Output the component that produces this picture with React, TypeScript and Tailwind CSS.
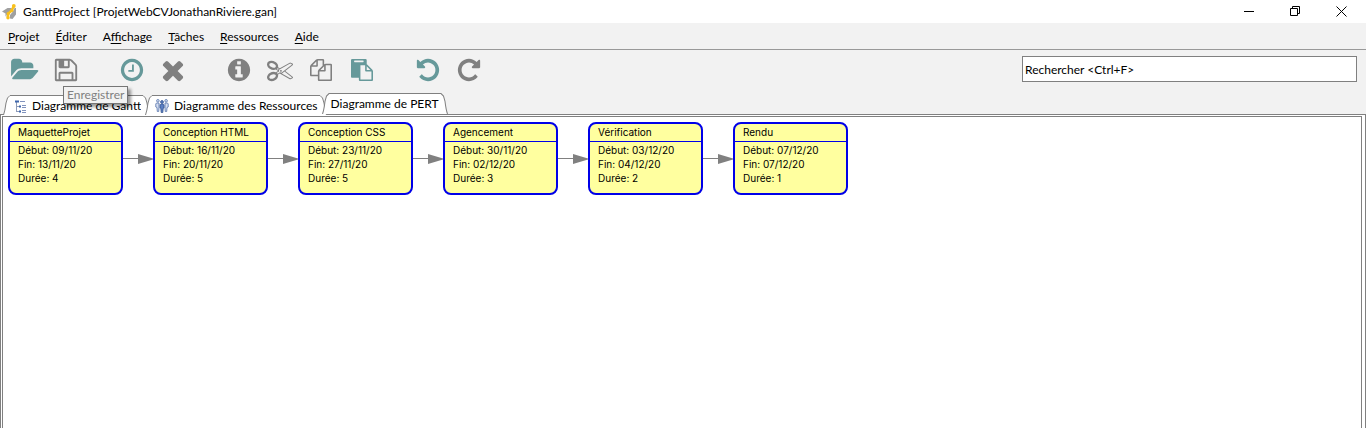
import React from "react";

const FONT = "font-['Lato','Open_Sans',sans-serif]";

const paths = {
  open: "M1879 952q0 31-31 66l-336 396q-43 51-120.500 86.500t-143.500 35.500h-1088q-34 0-60.500-13t-26.500-43q0-31 31-66l336-396q43-51 120.500-86.500t143.500-35.500h1088q34 0 60.500 13t26.500 43zm-343-344v160h-832q-94 0-197 47.500t-164 119.500l-337 396-5 6q0-4-.5-12.500t-.5-12.500v-960q0-92 66-158t158-66h320q92 0 158 66t66 158v32h544q92 0 158 66t66 158z",
  save: "M512 1536h768v-384h-768v384zm896 0h128v-896q0-14-10-38.500t-20-34.500l-281-281q-10-10-34-20t-39-10v416q0 40-28 68t-68 28h-576q-40 0-68-28t-28-68v-416h-128v1280h128v-416q0-40 28-68t68-28h832q40 0 68 28t28 68v416zm-384-928v-320q0-13-9.500-22.500t-22.500-9.500h-192q-13 0-22.500 9.500t-9.500 22.500v320q0 13 9.500 22.500t22.500 9.500h192q13 0 22.500-9.500t9.500-22.500zm640 32v928q0 40-28 68t-68 28h-1344q-40 0-68-28t-28-68v-1344q0-40 28-68t68-28h928q40 0 88 20t76 48l280 280q28 28 48 76t20 88z",
  clock: "M1024 544v448q0 14-9 23t-23 9h-320q-14 0-23-9t-9-23v-64q0-14 9-23t23-9h224v-352q0-14 9-23t23-9h64q14 0 23 9t9 23zm416 352q0-148-73-273t-198-198-273-73-273 73-198 198-73 273 73 273 198 198 273 73 273-73 198-198 73-273zm224 0q0 209-103 385.500t-279.500 279.500-385.500 103-385.500-103-279.500-279.500-103-385.500 103-385.500 279.500-279.500 385.500-103 385.500 103 279.500 279.500 103 385.500z",
  remove: "M1490 1322q0 40-28 68l-136 136q-28 28-68 28t-68-28l-294-294-294 294q-28 28-68 28t-68-28l-136-136q-28-28-28-68t28-68l294-294-294-294q-28-28-28-68t28-68l136-136q28-28 68-28t68 28l294 294 294-294q28-28 68-28t68 28l136 136q28 28 28 68t-28 68l-294 294 294 294q28 28 28 68z",
  info: "M1152 1376v-160q0-14-9-23t-23-9h-96v-512q0-14-9-23t-23-9h-320q-14 0-23 9t-9 23v160q0 14 9 23t23 9h96v320h-96q-14 0-23 9t-9 23v160q0 14 9 23t23 9h448q14 0 23-9t9-23zm-128-896v-160q0-14-9-23t-23-9h-192q-14 0-23 9t-9 23v160q0 14 9 23t23 9h192q14 0 23-9t9-23zm640 416q0 209-103 385.500t-279.500 279.500-385.500 103-385.500-103-279.500-279.500-103-385.500 103-385.500 279.500-279.500 385.500-103 385.500 103 279.500 279.500 103 385.500z",
  cut: "M960 896q26 0 45 19t19 45-19 45-45 19-45-19-19-45 19-45 45-19zm300 64l507 398q28 20 25 56-5 35-35 51l-128 64q-13 7-29 7-17 0-31-8l-690-387-110 66q-8 4-12 5 14 49 10 97-7 77-56 147.500t-132 123.500q-132 84-277 84-136 0-222-78-90-84-79-207 7-76 56-147t131-124q132-84 278-84 83 0 151 31 9-13 22-22l122-73-122-73q-13-9-22-22-68 31-151 31-146 0-278-84-82-53-131-124t-56-147q-5-59 15.500-113t63.500-93q85-79 222-79 145 0 277 84 83 52 132 123t56 148q4 48-10 97 4 1 12 5l110 66 690-387q14-8 31-8 16 0 29 7l128 64q30 16 35 51 3 36-25 56zm-681-260q46-42 21-108t-106-117q-92-59-192-59-74 0-113 36-46 42-21 108t106 117q92 59 192 59 74 0 113-36zm-85 745q81-51 106-117t-21-108q-39-36-113-36-100 0-192 59-81 51-106 117t21 108q39 36 113 36 100 0 192-59zm178-613l96 58v-11q0-36 33-56l14-8-79-44-26 26q-3 3-10 11t-12 12q-2 2-4 3.500t-3 2.500zm224 224l96 32 736-576-128-64-768 431v113l-160 96 9 8q2 2 7 6 4 4 11 12t11 12l26 26zm704 416l128-64-520-408-177 138q-2 3-13 7z",
  copy: "M1696 384q40 0 68 28t28 68v1216q0 40-28 68t-68 28h-960q-40 0-68-28t-28-68v-288h-544q-40 0-68-28t-28-68v-672q0-40 20-88t48-76l408-408q28-28 76-48t88-20h416q40 0 68 28t28 68v328q68-40 128-40h416zm-544 213l-299 299h299v-299zm-640-384l-299 299h299v-299zm196 647l316-316v-416h-384v416q0 40-28 68t-68 28h-416v640h512v-256q0-40 20-88t48-76zm956 804v-1152h-384v416q0 40-28 68t-68 28h-416v640h896z",
  paste: "M768 1664h896v-640h-416q-40 0-68-28t-28-68v-416h-384v1152zm256-1440v-64q0-13-9.500-22.500t-22.500-9.500h-704q-13 0-22.500 9.500t-9.500 22.500v64q0 13 9.500 22.500t22.500 9.500h704q13 0 22.500-9.500t9.500-22.500zm256 672h299l-299-299v299zm512 128v672q0 40-28 68t-68 28h-960q-40 0-68-28t-28-68v-160h-544q-40 0-68-28t-28-68v-1344q0-40 28-68t68-28h1088q40 0 68 28t28 68v328q21 13 36 28l408 408q28 28 48 76t20 88z",
  undo: "M1664 896q0 156-61 298t-164 245-245 164-298 61q-172 0-327-72.500t-264-204.500q-7-10-6.500-22.500t8.500-20.500l137-138q10-9 25-9 16 2 23 12 73 95 179 147t225 52q104 0 198.500-40.500t163.500-109.500 109.500-163.500 40.500-198.500-40.500-198.500-109.500-163.500-163.500-109.500-198.500-40.500q-98 0-188 35.500t-160 101.500l137 138q31 30 14 69-17 40-59 40h-448q-26 0-45-19t-19-45v-448q0-42 40-59 39-17 69 14l130 129q107-101 244.500-156.500t284.500-55.500q156 0 298 61t245 164 164 245 61 298z",
  redo: "M1664 256v448q0 26-19 45t-45 19h-448q-42 0-59-40-17-39 14-69l138-138q-148-137-349-137-104 0-198.500 40.500t-163.500 109.500-109.500 163.500-40.500 198.500 40.500 198.500 109.500 163.500 163.500 109.500 198.500 40.500q119 0 225-52t179-147q7-10 23-12 15 0 25 9l137 138q9 8 9.500 20.500t-7.500 22.500q-109 132-264 204.500t-327 72.500q-156 0-298-61t-245-164-164-245-61-298 61-298 164-245 245-164 298-61q147 0 284.500 55.500t244.500 156.500l130-129q29-31 70-14 39 17 39 59z",
};

type Tool = {
  icon: keyof typeof paths;
  label: string;
  teal?: boolean;
  box?: string;
  size?: string;
  tip?: boolean;
};

const toolGroups: Tool[][] = [
  [
    { icon: "open", label: "Ouvrir", teal: true, box: "0 0 1920 1792", size: "h-[26px] w-7" },
    { icon: "save", label: "Enregistrer", tip: true },
  ],
  [
    { icon: "clock", label: "Aujourd'hui", teal: true },
    { icon: "remove", label: "Supprimer", box: "192 192 1408 1408", size: "size-6" },
  ],
  [
    { icon: "info", label: "Propriétés" },
    { icon: "cut", label: "Couper" },
    { icon: "copy", label: "Copier", size: "size-[22px]" },
    { icon: "paste", label: "Coller", teal: true, size: "size-[22px]" },
  ],
  [
    { icon: "undo", label: "Annuler", teal: true },
    { icon: "redo", label: "Rétablir" },
  ],
];

function ToolButton({ tool }: { tool: Tool }) {
  return (
    <div className="relative">
      <button aria-label={tool.label} className="flex h-10 w-[41px] items-center justify-center">
        <svg
          viewBox={tool.box ?? "0 0 1792 1792"}
          className={`${tool.size ?? "size-[26px]"} ${tool.teal ? "fill-[#66999a]" : "fill-[#808080]"}`}
        >
          <path d={paths[tool.icon]} />
        </svg>
      </button>
      {tool.tip && (
        <div
          role="tooltip"
          className="absolute top-9 left-[18px] z-10 border border-[#767676] bg-[#f2f2f2] px-[3px] leading-4 text-[#808080] shadow-[3px_3px_3px_rgba(0,0,0,0.4)]"
        >
          {tool.label}
        </div>
      )}
    </div>
  );
}

function AppLogo() {
  return (
    <svg viewBox="0 0 16 16" className="size-4">
      <path d="M0 7.500 5.500 4H10L7.500 8 4.500 11v2L3.500 12V9.500z" fill="#a0a0a0" />
      <path d="M8 14.500V11l3-3.500L12.500 4H14v6.500L10.500 15z" fill="#a0a0a0" />
      <path d="M11.500 2.500 9.800 6.500 6.200 9.500 6 13.500" fill="none" stroke="#f8c01c" strokeWidth="2.400" />
      <circle cx="11.800" cy="2" r="1.900" fill="#f8c01c" />
      <circle cx="9.800" cy="6.500" r="1.700" fill="#f8c01c" />
      <circle cx="6.300" cy="9.600" r="1.700" fill="#f8c01c" />
      <circle cx="6" cy="13.800" r="1.700" fill="#f8c01c" />
    </svg>
  );
}

function TitleBar() {
  return (
    <header className="flex h-[23px] items-center bg-white pr-0.5 pl-0.5">
      <AppLogo />
      <h1 className="ml-[5px] flex-1">GanttProject [ProjetWebCVJonathanRiviere.gan]</h1>
      <div className="flex">
        <button aria-label="Réduire" className="flex h-5 w-[46px] items-center justify-center">
          <svg viewBox="0 0 11 11" className="size-[11px]"><path d="M0 5.500h10" stroke="#000" /></svg>
        </button>
        <button aria-label="Restaurer" className="flex h-5 w-[46px] items-center justify-center">
          <svg viewBox="0 0 11 11" className="size-[11px]" fill="none" stroke="#000">
            <path d="M.5 2.500h7v7h-7zM2.500 2.500v-2h7v7h-2" />
          </svg>
        </button>
        <button aria-label="Fermer" className="flex h-5 w-[46px] items-center justify-center">
          <svg viewBox="0 0 11 11" className="size-[11px]"><path d="M.5.5l10 10M10.500.5l-10 10" stroke="#000" /></svg>
        </button>
      </div>
    </header>
  );
}

const menus = ["Projet", "Éditer", "Affichage", "Tâches", "Ressources", "Aide"];

function MenuBar() {
  return (
    <nav className="flex h-[27px] items-center gap-4 border-b border-[#999] px-2 pt-0.5">
      {menus.map((m) => (
        <button key={m}>
          {m === "Affichage" ? (
            <>A<u className="underline-offset-2">f</u>fichage</>
          ) : (
            <><u className="underline-offset-2">{m[0]}</u>{m.slice(1)}</>
          )}
        </button>
      ))}
    </nav>
  );
}

function GanttIcon() {
  return (
    <svg viewBox="0 0 16 16" className="size-4" fill="none">
      <path d="M4.500 4v10M4.500 8.500h3M4.500 13.500h3" stroke="#8d9bb9" />
      <path d="M3 3.500h4M7 8.500h2M7 13.500h2" stroke="#3f66ac" strokeWidth="2" />
      <path d="M8 3.500h5M10 7.500h4M10 9.500h4M10 12.500h4M10 14.500h4" stroke="#8193bd" />
    </svg>
  );
}

function PeopleIcon() {
  return (
    <svg viewBox="0 0 16 16" className="size-4">
      <g fill="#d5dff0" stroke="#6480b4" strokeWidth=".9">
        <path d="M2.500 5h2.500v5L4.700 13.500H3.300L3 9.500 1.800 9V6z" />
        <path d="M13.500 5H11v5l.3 3.500h1.400l.3-4 1.200-.5V6z" />
        <circle cx="3.900" cy="2.800" r="1.300" />
        <circle cx="12.100" cy="2.800" r="1.300" />
      </g>
      <g fill="#5c80c4" stroke="#34548f" strokeWidth=".8">
        <path d="M6.800 6h2.400l.8.800v3.200l-.8.300-.4 4.200H7.200l-.4-4.200-.8-.3V6.800z" />
        <circle cx="8" cy="4" r="1.400" />
      </g>
    </svg>
  );
}

function Tab({ label, icon, active }: { label: string; icon?: React.ReactNode; active?: boolean }) {
  return (
    <button
      role="tab"
      aria-selected={!!active}
      className={`-mr-[5px] flex items-stretch ${active ? "z-[1] h-[22px] pb-px" : "h-5"}`}
    >
      <svg viewBox="0 0 9 20" preserveAspectRatio="none" className="h-full w-[9px]">
        <path d="M.5 20Q2 16 3 8L4.500 3 7 .5H9V20z" fill="#fff" />
        <path d="M.5 20Q2 16 3 8L4.500 3 7 .5H9" fill="none" stroke="#808080" />
      </svg>
      <span className="flex items-center gap-1 border-t border-[#808080] bg-white">
        {icon}
        {label}
      </span>
      <svg viewBox="0 0 9 20" preserveAspectRatio="none" className="h-full w-[9px]">
        <path d="M0 .5H2L4.500 3 6 8Q7 16 8.500 20H0z" fill="#fff" />
        <path d="M0 .5H2L4.500 3 6 8Q7 16 8.500 20" fill="none" stroke="#808080" />
      </svg>
    </button>
  );
}

const tasks = [
  { name: "MaquetteProjet", start: "09/11/20", end: "13/11/20", days: 4 },
  { name: "Conception HTML", start: "16/11/20", end: "20/11/20", days: 5 },
  { name: "Conception CSS", start: "23/11/20", end: "27/11/20", days: 5 },
  { name: "Agencement", start: "30/11/20", end: "02/12/20", days: 3 },
  { name: "Vérification", start: "03/12/20", end: "04/12/20", days: 2 },
  { name: "Rendu", start: "07/12/20", end: "07/12/20", days: 1 },
];

function PertChart() {
  return (
    <div className="flex items-center font-['Inter','Liberation_Sans',sans-serif] text-[10px] leading-[14px]">
      {tasks.map((t, i) => (
        <React.Fragment key={t.name}>
          {i > 0 && (
            <svg viewBox="0 0 30 10" className="h-2.5 w-[30px] shrink-0">
              <path d="M0 4.500h16" stroke="#808080" />
              <path d="M15 0l15 4.500v1L15 10z" fill="#808080" />
            </svg>
          )}
          <article className="h-[73px] w-[115px] shrink-0 rounded-lg border-2 border-[#0000e8] bg-[#ffff9f]">
            <h2 className="h-[18px] border-b border-[#0000e8] px-2 pt-px">{t.name}</h2>
            <div className="px-2 pt-px">
              <p>Début: {t.start}</p>
              <p>Fin: {t.end}</p>
              <p>Durée: {t.days}</p>
            </div>
          </article>
        </React.Fragment>
      ))}
    </div>
  );
}

export default function App() {
  return (
    <div className={`flex min-h-screen flex-col bg-[#f2f2f2] text-xs text-black ${FONT}`}>
      <TitleBar />
      <MenuBar />
      <div className="flex items-start justify-between pr-[9px] pl-1">
        <div className="flex gap-[25px]">
          {toolGroups.map((group, i) => (
            <div key={i} className="flex">
              {group.map((tool) => (
                <ToolButton key={tool.icon} tool={tool} />
              ))}
            </div>
          ))}
        </div>
        <input
          type="text"
          aria-label="Rechercher"
          defaultValue="Rechercher <Ctrl+F>"
          className="mt-1.5 h-[26px] w-[335px] border border-[#808080] bg-white px-0.5 outline-none"
        />
      </div>
      <div role="tablist" className="z-[1] -mb-px mt-[3px] flex h-[22px] items-end pl-[3px]">
        <Tab label="Diagramme de Gantt" icon={<GanttIcon />} />
        <Tab label="Diagramme des Ressources" icon={<PeopleIcon />} />
        <Tab label="Diagramme de PERT" active />
      </div>
      <main className="flex flex-1 flex-col border border-b-0 border-[#808080] bg-white pt-px pr-[3px] pl-px">
        <div className="flex-1 border border-b-0 border-[#808080] px-[5px] pt-[5px]">
          <PertChart />
        </div>
      </main>
    </div>
  );
}
